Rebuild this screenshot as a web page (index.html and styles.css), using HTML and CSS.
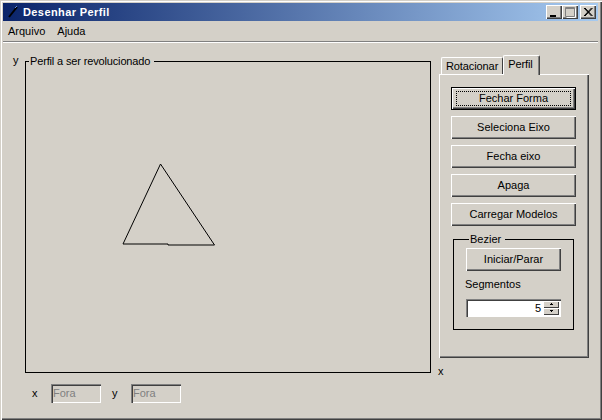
FILE: index.html
```html
<!DOCTYPE html>
<html lang="pt">
<head>
<meta charset="utf-8">
<title>Desenhar Perfil</title>
<link rel="stylesheet" href="styles.css">
</head>
<body>
<div class="window">
  <header class="titlebar">
    <svg class="app-icon" width="10" height="12" viewBox="0 0 10 12"><path d="M1 11 9 1" stroke="#000" stroke-width="2" fill="none"/><path d="M7 2 9 0" stroke="#6a8fd0" stroke-width="1" fill="none"/></svg>
    <span class="title">Desenhar Perfil</span>
    <div class="controls">
      <span class="ctl"><svg width="14" height="12" viewBox="0 0 14 12"><rect x="3" y="9" width="6" height="2" fill="#000"/></svg></span>
      <span class="ctl"><svg width="14" height="12" viewBox="0 0 14 12"><path d="M2.500 1.500h9v9h-9z" fill="none" stroke="#808080"/><path d="M2 2.500h10" stroke="#808080"/><path d="M3.500 11.500h9v-9" fill="none" stroke="#fff"/></svg></span>
      <span class="ctl ctl-close"><svg width="14" height="12" viewBox="0 0 14 12"><path d="M3 2 10.500 10M4 2 11.500 10M10.500 2 3 10M11.500 2 4 10" stroke="#000" fill="none"/></svg></span>
    </div>
  </header>
  <nav class="menubar"><span class="menu-item">Arquivo</span><span class="menu-item">Ajuda</span></nav>
  <div class="rule"></div>
  <main class="content">
    <section class="left">
      <div class="canvas-row">
        <span class="axis-y">y</span>
        <fieldset class="plot">
          <legend class="plot-legend">Perfil a ser revolucionado</legend>
          <svg class="plot-svg" width="404" height="310" viewBox="0 0 404 310">
            <path d="M134.500 96 97 176 142 176 142 177 188.500 177 134.500 96" fill="none" stroke="#000" stroke-width="1"/>
          </svg>
        </fieldset>
      </div>
      <div class="status">
        <span class="status-label">x</span><span class="field">Fora</span>
        <span class="status-label status-label-y">y</span><span class="field">Fora</span>
      </div>
    </section>
    <aside class="right">
      <div class="tabs">
        <span class="tab">Rotacionar</span>
        <span class="tab tab-active">Perfil</span>
      </div>
      <div class="panel">
        <button class="btn btn-wide btn-default"><span class="focus">Fechar Forma</span></button>
        <button class="btn btn-wide">Seleciona Eixo</button>
        <button class="btn btn-wide">Fecha eixo</button>
        <button class="btn btn-wide">Apaga</button>
        <button class="btn btn-wide">Carregar Modelos</button>
        <fieldset class="bezier">
          <legend class="bezier-legend">Bezier</legend>
          <button class="btn btn-start">Iniciar/Parar</button>
          <div class="seg-label">Segmentos</div>
          <div class="spin">
            <span class="spin-value">5</span>
            <span class="spin-btns">
              <span class="spin-btn"><svg width="5" height="3" viewBox="0 0 5 3"><path d="M2 0h1v1h1v1H1V1h1z" fill="#000"/></svg></span>
              <span class="spin-btn"><svg width="5" height="3" viewBox="0 0 5 3"><path d="M1 0h3v1H3v1H2V1H1z" fill="#000"/></svg></span>
            </span>
          </div>
        </fieldset>
      </div>
      <span class="axis-x">x</span>
    </aside>
  </main>
</div>
</body>
</html>
```
FILE: styles.css
```css
* { box-sizing: border-box; }
html, body { margin: 0; padding: 0; }
body {
  width: 602px; height: 420px; overflow: hidden;
  font: 11px/13px "Liberation Sans", Arial, sans-serif;
  color: #000; background: #d4d0c8;
}
.window {
  width: 602px; height: 420px; padding: 3px 4px 3px 3px;
  background: #d4d0c8;
  box-shadow: inset 1px 1px 0 #d4d0c8, inset 2px 2px 0 #fff, inset -1px -1px 0 #404040, inset -2px -2px 0 #808080;
  display: flex; flex-direction: column;
}
.titlebar {
  height: 18px; flex: none; display: flex; align-items: center; padding: 0 2px 0 5px;
  background: linear-gradient(90deg, #0a246a, #a6caf0);
  color: #fff;
}
.app-icon { flex: none; }
.title { font-weight: 700; margin-left: 5px; letter-spacing: 0.4px; }
.controls { margin-left: auto; display: flex; }
.ctl {
  width: 16px; height: 14px; background: #d4d0c8; display: flex; align-items: center; justify-content: center;
  box-shadow: inset 1px 1px 0 #fff, inset -1px -1px 0 #404040, inset -2px -2px 0 #808080;
}
.ctl-close { margin-left: 2px; }
.menubar {
  height: 20px; flex: none; display: flex; align-items: center; padding: 0 0 0 5px; gap: 12px;
}
.rule { height: 2px; flex: none; border-top: 1px solid #808080; border-bottom: 1px solid #fff; }
.content { flex: 1; display: flex; padding-top: 11px; }
.left { width: 436px; flex: none; }
.canvas-row { display: flex; padding-left: 10px; }
.axis-y { width: 12px; flex: none; }
.plot {
  margin: 0; padding: 0; width: 406px; height: 319px; border: 1px solid #000; min-width: 0;
}
.plot-legend { padding: 0 4px 0 1px; margin-left: 3px; line-height: 14px; letter-spacing: -0.15px; }
.plot-svg { display: block; }
.status { display: flex; align-items: center; padding: 11px 0 0 29px; }
.status-label { width: 19px; }
.status-label-y { width: 19px; margin-left: 11px; }
.field {
  width: 50px; height: 19px; padding: 3px 0 0 2px; color: #808080;
  box-shadow: inset 1px 1px 0 #808080, inset 2px 2px 0 #404040, inset -1px -1px 0 #fff;
}
.right { width: 150px; flex: none; }
.tabs { display: flex; align-items: flex-end; height: 20px; padding-left: 2px; }
.tab {
  height: 17px; padding: 2px 4px 0 4px; background: #d4d0c8;
  border-top: 1px solid #fff; border-left: 1px solid #fff; border-right: 1px solid #404040;
  border-radius: 2px 2px 0 0; letter-spacing: -0.1px;
}
.tab-active {
  height: 20px; padding: 2px 6px 0 4px; margin-bottom: -1px; position: relative; z-index: 1;
  box-shadow: inset -1px 0 0 #808080;
}
.panel {
  height: 284px; padding: 13px 13px 0 12px;
  display: flex; flex-direction: column; align-items: flex-start;
  box-shadow: inset 1px 1px 0 #fff, inset -1px -1px 0 #404040, inset -2px -2px 0 #808080;
}
.btn {
  font: inherit; color: #000; background: #d4d0c8; border: 0; padding: 0; margin: 0;
  box-shadow: inset 1px 1px 0 #fff, inset -1px -1px 0 #404040, inset -2px -2px 0 #808080;
  display: flex; align-items: center; justify-content: center;
}
.btn-wide { width: 125px; height: 23px; margin-top: 6px; flex: none; }
.btn-wide:first-child { margin-top: 0; }
.btn-default {
  box-shadow: inset 0 0 0 1px #000, inset 2px 2px 0 #fff, inset -2px -2px 0 #404040, inset -3px -3px 0 #808080;
}
.focus {
  width: 115px; height: 15px; border: 1px dotted #000; display: block; line-height: 13px;
}
.bezier {
  margin: 7px 0 0 2px; padding: 0 0 0 12px; width: 121px; height: 97px; border: 1px solid #000; min-width: 0;
}
.bezier-legend { padding: 0 4px 0 1px; margin-left: 3px; line-height: 13px; }
.btn-start { width: 95px; height: 23px; margin-top: 2px; }
.seg-label { margin-top: 7px; margin-left: -1px; }
.spin {
  margin-top: 8px; width: 95px; height: 18px; background: #fff; display: flex; align-items: center; justify-content: flex-end;
  box-shadow: inset 1px 1px 0 #808080, inset 2px 2px 0 #404040, inset -1px -1px 0 #fff;
}
.spin-value { padding-right: 2px; }
.spin-btns { display: flex; flex-direction: column; margin-right: 2px; }
.spin-btn {
  width: 16px; height: 7px; background: #d4d0c8; display: flex; align-items: center; justify-content: center;
  box-shadow: inset 1px 1px 0 #fff, inset -1px -1px 0 #404040;
}
.axis-x { display: block; margin: 7px 0 0 -1px; }
```
